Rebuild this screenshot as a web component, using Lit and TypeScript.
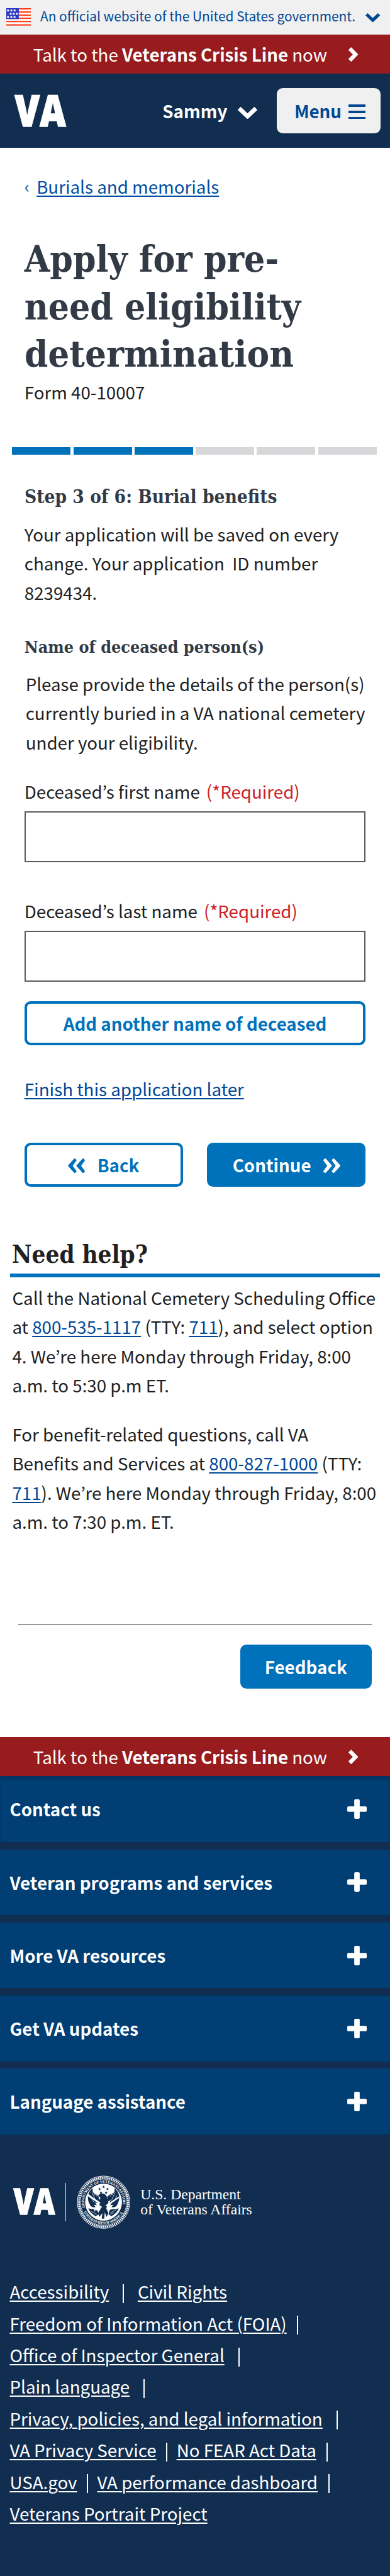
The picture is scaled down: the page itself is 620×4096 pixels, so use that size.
import { LitElement, html, svg, css } from "lit";
import { customElement, property } from "lit/decorators.js";

const rightChevron = html`<svg class="chev" width="16" height="24" viewBox="0 0 16 24">
  <path d="M.8 4.6 4.4 1 15.2 12 4.4 23 .8 19.4 8 12Z" />
</svg>`;

const downChevron = (w: number, h: number) => html`<svg
  class="chev"
  width=${w}
  height=${h}
  viewBox="0 0 32 20"
>
  <path d="M.8 4.8 4.8 .8 16 11.6 27.2 .8 31.2 4.8 16 19.2Z" />
</svg>`;

const doubleChevron = (flip: boolean) => html`<svg
  class=${flip ? "chev flip" : "chev"}
  width="28"
  height="24"
  viewBox="0 0 28 24"
>
  <path d="M.6 21.2 3.2 23.4 13.6 12 3.2.6.6 2.8 7.2 12Z" />
  <path d="M14.4 21.2 17 23.4 27.4 12 17 .6 14.4 2.8 21 12Z" />
</svg>`;

const sheet = css`
  .chev {
    display: block;
    flex: none;
    fill: currentColor;
    stroke: currentColor;
    stroke-width: 1.4;
    stroke-linejoin: round;
  }
  .flip {
    transform: scaleX(-1);
  }
  a {
    color: inherit;
    text-decoration: underline;
    text-decoration-thickness: 2.1px;
    text-underline-offset: 3.4px;
  }
`;

@customElement("us-flag")
export class UsFlag extends LitElement {
  static styles = css`
    :host {
      display: block;
      flex: none;
      width: 41px;
      height: 29px;
    }
    svg {
      display: block;
    }
  `;
  render() {
    const stars = [
      [1.4, 2.3], [6.8, 2.3], [12.1, 2.3],
      [5.6, 7.8], [10.6, 7.8], [15.8, 7.8],
      [1.4, 13], [6.8, 13], [12.1, 13],
    ];
    return html`<svg width="41" height="29" viewBox="0 0 41 29">
      <rect width="41" height="29" fill="#fff" />
      ${[0, 5.2, 10.4, 15.5, 20.8, 26.4].map(
        (y) => svg`<rect y=${y} width="41" height="2.2" fill="#ff3b14" />`
      )}
      <rect width="20.5" height="18" fill="#2b37c2" />
      ${stars.map(([x, y]) => svg`<rect x=${x} y=${y} width="3" height="3" fill="#fff" />`)}
    </svg>`;
  }
}

@customElement("va-mark")
export class VaMark extends LitElement {
  @property({ type: Number }) width = 85;
  static styles = css`
    :host {
      display: block;
      flex: none;
    }
    svg {
      display: block;
      overflow: visible;
    }
    text {
      font: 800 71px "Open Sans", sans-serif;
      fill: #fff;
      stroke: #fff;
      stroke-width: 1.6;
    }
  `;
  render() {
    return html`<svg width=${this.width} height=${(this.width * 52) / 85} viewBox="0 0 85 52">
      <text x="0.6" y="51.4" textLength="83.8" lengthAdjust="spacingAndGlyphs">VA</text>
    </svg>`;
  }
}

@customElement("va-seal")
export class VaSeal extends LitElement {
  static styles = css`
    :host {
      display: block;
      flex: none;
    }
    svg {
      display: block;
    }
    text {
      font: 700 6px "Liberation Serif", serif;
      fill: #fff;
    }
  `;
  render() {
    const star = "M0-2.6.7-.8 2.5-.8 1.1.4 1.6 2.1 0 1.1-1.6 2.1-1.1.4-2.5-.8-.7-.8Z";
    return html`<svg width="88" height="88" viewBox="-44 -44 88 88">
      <defs>
        <path id="top" d="M-29.6 11.5A31.8 31.8 0 1 1 29.6 11.5" />
        <path id="bottom" d="M-33.5 13.2A36 36 0 0 0 33.5 13.2" />
      </defs>
      <circle r="43" fill="none" stroke="#fff" stroke-width="1" />
      <circle r="40.2" fill="none" stroke="#fff" stroke-width="3.2" stroke-dasharray="2 1.1" />
      <circle r="37.9" fill="none" stroke="#fff" stroke-width=".7" />
      <text><textPath href="#top" textLength="112" startOffset="3">DEPARTMENT OF VETERANS AFFAIRS</textPath></text>
      <text><textPath href="#bottom" textLength="78" startOffset="3">UNITED STATES OF AMERICA</textPath></text>
      <circle r="30.2" fill="#fff" />
      <g fill="#112e51">
        ${[[-6.5, -21.5], [0, -25], [6.5, -21.5], [-4.2, -15.5], [4.2, -15.5]].map(
          ([x, y]) => svg`<path transform="translate(${x} ${y})" d=${star} />`
        )}
        <path d="M-18-23C-26-17-28-6-23 3-21 8-17 9-13 8L-16 4-11 5-14 0-9 2-12-4-7-1-8-9-12-13-11-9-15-16-14-11-18-18Z" />
        <path d="M18-23C26-17 28-6 23 3 21 8 17 9 13 8L16 4 11 5 14 0 9 2 12-4 7-1 6-9 12-14 11-9 15-16 14-11 18-18Z" />
        <path d="M-9-11C-5-16 2-15 5-10L8 0 5 9-1 13-6 7-8-2-5-7Z" />
        <path d="M-4 9 4 9 8 18 5 24 2 17 1 27-3 27-2 18-7 24-9 18Z" />
        <path d="M-25 10C-20 12-15 11-10 14L-8 20-13 23C-18 20-23 16-25 10Z" />
        <path d="M25 10C20 13 15 10 10 13L8 20 13 23C18 20 23 16 25 10Z" />
      </g>
      <g fill="none" stroke="#fff">
        <path d="M-26-12-6 2" stroke-width="3" />
        <path d="M25-8 4 6" stroke-width="2.4" />
        <path d="M-12 11C-9 4-4 6-3 9M-15 15C-12 7-7 10-6 13" stroke-width="1.5" />
        <path d="M11 17 20 13M10 20 17 17M-20 15-11 20M-19-16-13-3M-22-11-16 0M19-16 13-3M22-11 17-1" stroke-width=".7" />
      </g>
    </svg>`;
  }
}

@customElement("crisis-line")
export class CrisisLine extends LitElement {
  static styles = [
    sheet,
    css`
      :host {
        display: flex;
        align-items: center;
        justify-content: space-between;
        box-sizing: border-box;
        height: 64px;
        padding: 0 52px 0 54.5px;
        background: #981b1e;
        color: #fff;
      }
      .label {
        white-space: nowrap;
      }
      b {
        font-weight: 700;
      }
    `,
  ];
  render() {
    return html`<span class="label">Talk to the <b>Veterans Crisis Line</b> now</span>${rightChevron}`;
  }
}

@customElement("footer-item")
export class FooterItem extends LitElement {
  @property() label = "";
  static styles = css`
    :host {
      display: flex;
      align-items: center;
      justify-content: space-between;
      box-sizing: border-box;
      height: 108px;
      padding: 0 38px 0 16px;
      background: #003e73;
      color: #fff;
      font-weight: 700;
    }
  `;
  render() {
    return html`<span>${this.label}</span>
      <svg width="32" height="32" viewBox="0 0 32 32" fill="#fff">
        <rect x="11.5" width="9" height="32" rx="2" />
        <rect y="11.7" width="32" height="8.8" rx="2" />
      </svg>`;
  }
}

const FOOTER_LINKS: [string, number?][][] = [
  [["Accessibility", 24], ["Civil Rights"]],
  [["Freedom of Information Act (FOIA)", 18]],
  [["Office of Inspector General", 24]],
  [["Plain language", 24]],
  [["Privacy, policies, and legal information", 24]],
  [["VA Privacy Service", 17], ["No FEAR Act Data", 18]],
  [["USA.gov", 17], ["VA performance dashboard", 19]],
  [["Veterans Portrait Project"]],
];

@customElement("app-root")
export class AppRoot extends LitElement {
  static styles = [
    sheet,
    css`
      :host {
        display: block;
        min-height: 100vh;
        overflow: hidden;
        background: #112e51;
      }
      .page {
        zoom: 0.969;
        font-family: "Noto Sans CJK KR", "Noto Sans CJK JP", "Noto Sans", sans-serif;
        font-size: 28.6px;
        line-height: 48px;
        color: #212121;
        white-space: nowrap;
      }
      .gov {
        display: flex;
        align-items: center;
        height: 57px;
        box-sizing: border-box;
        padding: 0 16px 2px 10px;
        background: #f0f0f0;
        color: #004795;
      }
      .gov .chev {
        margin-top: 3px;
      }
      .gov-text {
        flex: 1;
        padding: 0 0 2px 15px;
        font-size: 21.55px;
      }
      .header {
        display: flex;
        align-items: center;
        box-sizing: border-box;
        height: 122px;
        padding: 0 16px 0 24px;
        background: #112e51;
        color: #fff;
        font-weight: 700;
      }
      .user {
        display: flex;
        align-items: center;
        gap: 17px;
        margin-left: auto;
      }
      .user .chev {
        margin-top: 6px;
      }
      .menu {
        display: flex;
        align-items: center;
        justify-content: space-between;
        box-sizing: border-box;
        width: 170px;
        height: 74px;
        margin-left: 32px;
        padding: 0 24px 1px 29px;
        border-radius: 10px;
        background: #f0f0f0;
        color: #004795;
      }
      .bars {
        display: grid;
        gap: 6px;
        width: 28px;
        padding-top: 4px;
      }
      .bars i {
        height: 4px;
        background: currentColor;
      }
      main {
        display: block;
        background: #fff;
      }
      .inset {
        padding: 0 40px;
      }
      .crumb {
        display: flex;
        padding-top: 38.5px;
        color: #004fa3;
      }
      .crumb .arrow {
        width: 20px;
        font-size: 28px;
      }
      h1,
      h2,
      h3,
      p {
        margin: 0;
      }
      .slab {
        font-family: "DejaVu Serif Condensed", "DejaVu Serif", serif;
        font-weight: 700;
        font-stretch: condensed;
        color: #323a45;
      }
      .fit {
        display: block;
        width: max-content;
        transform-origin: 0 50%;
      }
      h1 {
        margin-top: 56.5px;
        font-size: 60px;
        line-height: 78px;
      }
      .wide {
        transform: scaleX(1.022);
      }
      .form-no {
        line-height: 46px;
      }
      .progress {
        display: grid;
        grid-template-columns: repeat(6, 1fr);
        gap: 4.4px;
        height: 12px;
        margin: 68px 22px 0 20px;
      }
      .progress i {
        background: #d6d7d9;
      }
      .progress .done {
        background: #0071bb;
      }
      h2.step {
        margin-top: 45px;
        font-size: 31.5px;
        line-height: 48px;
      }
      .step .fit {
        transform: scaleX(0.97);
      }
      .saved {
        margin-top: 13px;
        white-space: pre;
      }
      h3 {
        margin-top: 42px;
        font-size: 27.6px;
        line-height: 48px;
      }
      .intro {
        margin-top: 12px;
        padding-left: 2px;
      }
      .field {
        display: block;
        margin-top: 32.5px;
      }
      .field + .field {
        margin-top: 55.5px;
      }
      .required {
        margin-left: 4px;
        color: #cd2026;
      }
      input {
        display: block;
        box-sizing: border-box;
        width: 100%;
        height: 84px;
        margin: 8.5px 0 0;
        border: 2.1px solid #5b5b5b;
        border-radius: 0;
        background: #fff;
      }
      .btn {
        display: flex;
        align-items: center;
        justify-content: center;
        box-sizing: border-box;
        height: 72px;
        border: 4.2px solid #0071bb;
        border-radius: 10px;
        color: #0071bb;
        font-weight: 700;
      }
      .solid {
        background: #0071bb;
        color: #fff;
      }
      .add {
        margin-top: 32px;
      }
      .later {
        margin-top: 47.5px;
        color: #004795;
      }
      .nav {
        display: grid;
        grid-template-columns: 1fr 1fr;
        gap: 40px;
        margin-top: 65px;
      }
      .nav .btn {
        gap: 20px;
      }
      .nav .chev {
        margin-top: 3px;
      }
      .help {
        margin: 80.5px 17px 0;
      }
      .help h2 {
        padding: 0 0 1.5px 3px;
        border-bottom: 6.2px solid #0071bb;
        color: #212121;
        font-size: 41px;
        line-height: 60px;
      }
      .help .fit {
        transform: scaleX(0.965);
      }
      .help p {
        padding: 9.5px 0 0 3px;
      }
      .help p + p {
        padding-top: 32px;
      }
      .help a {
        color: #004795;
      }
      .feedback {
        display: flex;
        justify-content: flex-end;
        margin: 143.5px 30px 0;
        padding: 32px 0 80px;
        border-top: 2.1px solid #999;
      }
      .feedback .btn {
        width: 216px;
      }
      .accordion {
        display: grid;
        gap: 12px;
      }
      .accordion footer-item:first-child {
        box-shadow: inset 0 6px 8px -4px rgba(10, 25, 50, 0.45);
      }
      footer {
        display: block;
        background: #112e51;
        color: #fff;
      }
      .brand {
        display: flex;
        align-items: center;
        padding: 67px 0 0 22px;
      }
      .rule {
        width: 1.4px;
        height: 63px;
        margin: 0 18px 0 16px;
        background: #d5dae0;
      }
      .dept {
        margin-left: 16px;
        font-family: "Liberation Serif", serif;
        font-size: 24.4px;
        line-height: 24px;
      }
      .links {
        padding: 76.5px 0 77px 16px;
        line-height: 52px;
      }
      .row {
        display: flex;
      }
      .row a {
        text-decoration-thickness: 2px;
      }
      .bar {
        box-sizing: border-box;
        align-self: center;
        width: 2px;
        height: 31px;
        margin-top: 7px;
        border-left: 2.1px solid #fff;
      }
    `,
  ];

  render() {
    return html`<div class="page">
      <div class="gov">
        <us-flag></us-flag>
        <span class="gov-text">An official website of the United States government.</span>
        ${downChevron(24, 15)}
      </div>
      <crisis-line></crisis-line>
      <header class="header">
        <va-mark></va-mark>
        <div class="user"><span>Sammy</span>${downChevron(32, 20)}</div>
        <div class="menu">
          <span>Menu</span>
          <span class="bars"><i></i><i></i><i></i></span>
        </div>
      </header>
      <main>
        <div class="inset">
          <nav class="crumb"><span class="arrow">‹</span><a>Burials and memorials</a></nav>
          <h1 class="slab">
            <span class="fit">Apply for pre-</span>
            <span class="fit">need eligibility</span>
            <span class="fit wide">determination</span>
          </h1>
          <p class="form-no">Form 40-10007</p>
        </div>
        <div class="progress">
          ${[1, 2, 3, 4, 5, 6].map((n) => html`<i class=${n <= 3 ? "done" : ""}></i>`)}
        </div>
        <div class="inset">
          <h2 class="slab step"><span class="fit">Step 3 of 6: Burial benefits</span></h2>
          <p class="saved">${"Your application will be saved on every\nchange. Your application  ID number\n8239434."}</p>
          <h3 class="slab"><span class="fit">Name of deceased person(s)</span></h3>
          <p class="intro">
            Please provide the details of the person(s)<br />currently buried in a VA national
            cemetery<br />under your eligibility.
          </p>
          ${["first", "last"].map(
            (part) => html`<label class="field"
              >Deceased’s ${part} name <span class="required">(*Required)</span><input type="text"
            /></label>`
          )}
          <div class="btn add">Add another name of deceased</div>
          <p class="later"><a>Finish this application later</a></p>
          <div class="nav">
            <div class="btn">${doubleChevron(true)}<span>Back</span></div>
            <div class="btn solid"><span>Continue</span>${doubleChevron(false)}</div>
          </div>
        </div>
        <section class="help">
          <h2 class="slab"><span class="fit">Need help?</span></h2>
          <p>
            Call the National Cemetery Scheduling Office<br />at <a>800-535-1117</a> (TTY:
            <a>711</a>), and select option<br />4. We’re here Monday through Friday, 8:00<br />a.m.
            to 5:30 p.m ET.
          </p>
          <p>
            For benefit-related questions, call VA<br />Benefits and Services at
            <a>800-827-1000</a> (TTY:<br /><a>711</a>). We’re here Monday through Friday,
            8:00<br />a.m. to 7:30 p.m. ET.
          </p>
        </section>
        <div class="feedback"><div class="btn solid">Feedback</div></div>
      </main>
      <crisis-line></crisis-line>
      <footer>
        <div class="accordion">
          ${[
            "Contact us",
            "Veteran programs and services",
            "More VA resources",
            "Get VA updates",
            "Language assistance",
          ].map((label) => html`<footer-item label=${label}></footer-item>`)}
        </div>
        <div class="brand">
          <va-mark width="69"></va-mark>
          <span class="rule"></span>
          <va-seal></va-seal>
          <div class="dept">U.S. Department<br />of Veterans Affairs</div>
        </div>
        <div class="links">
          ${FOOTER_LINKS.map(
            (row) => html`<div class="row">
              ${row.map(
                ([text, gap]) => html`<a>${text}</a>${gap
                    ? html`<span class="bar" style="margin-inline:${gap - 1.5}px"></span>`
                    : ""}`
              )}
            </div>`
          )}
        </div>
      </footer>
    </div>`;
  }
}
